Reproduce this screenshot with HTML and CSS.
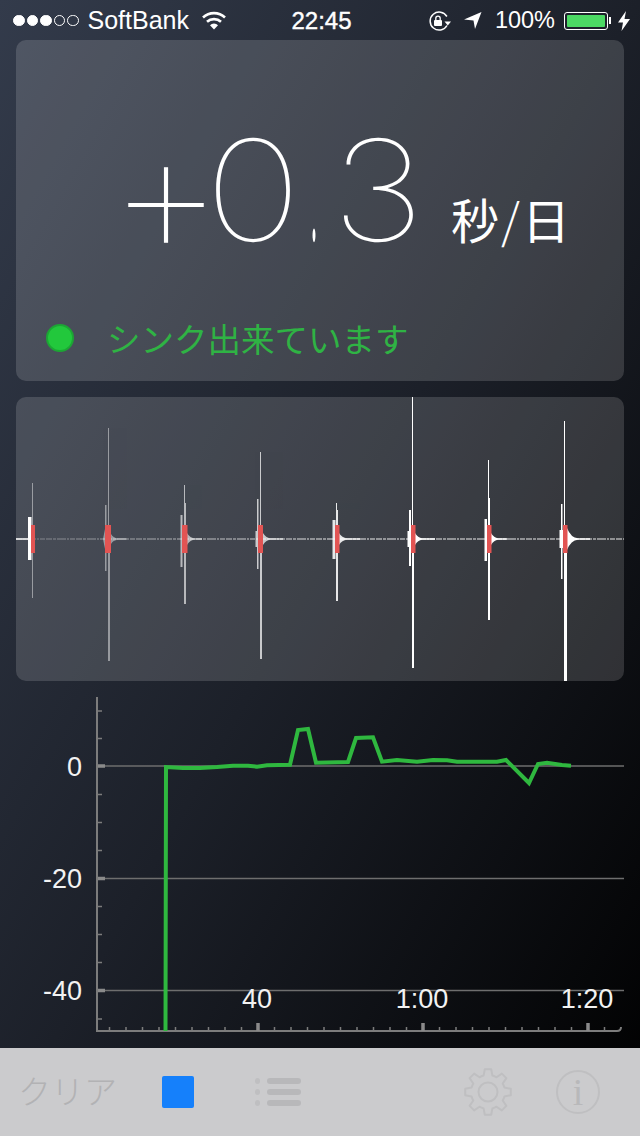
FILE: index.html
```html
<!DOCTYPE html>
<html lang="ja">
<head>
  <meta charset="UTF-8" />
  <meta name="viewport" content="width=device-width, initial-scale=1.0" />
  <title>Timegrapher</title>
  <link rel="stylesheet" href="styles.css">
</head>
<body>
  <div class="statusbar">
    <div class="status-left">
      <span class="sig"></span><span class="sig"></span><span class="sig"></span><span class="sig off"></span><span class="sig off"></span>
      <span class="carrier">SoftBank</span>
      <svg class="wifi" width="24" height="19" viewBox="0 0 24 19">
        <path d="M1 6.5A16 16 0 0 1 23 6.5" fill="none" stroke="#fff" stroke-width="2.6"/>
        <path d="M5 10.8A10.4 10.4 0 0 1 19 10.8" fill="none" stroke="#fff" stroke-width="2.6"/>
        <path d="M12 18.5L8 14.2A5.6 5.6 0 0 1 16 14.2Z" fill="#fff"/>
      </svg>
    </div>
    <div class="clock">22:45</div>
    <div class="status-right">
      <svg class="rotlock" width="24" height="20" viewBox="0 0 24 20">
        <path d="M19 14.5A9 9 0 1 1 18.9 5.500" fill="none" stroke="#fff" stroke-width="1.5"/>
        <path d="M16.500 10.500H23L19.800 14.500Z" fill="#fff"/>
        <rect x="6" y="9" width="8" height="6" rx="1" fill="#fff"/>
        <path d="M7.800 9V7.300A2.200 2.200 0 0 1 12.200 7.300V9" fill="none" stroke="#fff" stroke-width="1.300"/>
      </svg>
      <svg class="locarrow" width="18" height="17" viewBox="0 0 18 17">
        <path d="M0 7.500L17.500 0L11 17L9.500 8.500Z" fill="#fff"/>
      </svg>
      <span class="pct">100%</span>
      <div class="battery"><div class="battery-fill"></div></div>
      <div class="battery-nub"></div>
      <svg class="bolt" width="12" height="20" viewBox="0 0 12 20">
        <path d="M8 0L0 11.500H5L3.500 20L12 8H6.500Z" fill="#fff"/>
      </svg>
    </div>
  </div>

  <div class="card reading">
    <div class="rate">
      <span class="rate-char rate-plus">+</span>
      <span class="rate-char rate-zero">0</span>
      <span class="rate-char rate-dot">.</span>
      <span class="rate-char rate-three">3</span>
      <span class="rate-unit">秒<span class="slash">/</span>日</span>
    </div>
    <div class="sync">
      <span class="sync-dot"></span>
      <span class="sync-text">シンク出来ています</span>
    </div>
  </div>

  <div class="card wave">
    <svg class="wave-svg" width="608" height="284" viewBox="16 397 608 284">
      <defs>
        <linearGradient id="noiseFade" gradientUnits="userSpaceOnUse" x1="30" y1="0" x2="340" y2="0">
          <stop offset="0" stop-color="#fff" stop-opacity="0.3"/>
          <stop offset="1" stop-color="#fff" stop-opacity="0.9"/>
        </linearGradient>
      </defs>
      <!-- baseline noise -->
      <line class="noise" stroke="url(#noiseFade)" x1="16" y1="539" x2="624" y2="539"/>
      <line class="base" x1="16" y1="539" x2="28" y2="539"/>

      <g class="beat" opacity="0.45">
        <rect x="32" y="483" width="1" height="115"/>
      </g>
      <rect class="solid" x="28" y="517" width="3.500" height="43"/>

      <g class="beat" opacity="0.45">
        <rect x="108" y="428" width="1" height="100"/>
        <rect x="108" y="550" width="2" height="111"/>
        <rect x="105" y="505" width="1.500" height="66"/>
        <path d="M103 539L105 529V549ZM111 534Q113 538 118 538.300H127V539.700H118Q113 540 111 544Z"/>
      </g>
      <g class="beat" opacity="0.62">
        <rect x="184" y="485" width="1" height="45"/>
        <rect x="184" y="503" width="2" height="101"/>
        <rect x="180.500" y="515" width="2" height="52"/>
        <path d="M187 533Q190 538 194 538.300H202V539.700H194Q190 540 187 545Z"/>
      </g>
      <g class="beat" opacity="0.72">
        <rect x="260" y="452" width="1" height="80"/>
        <rect x="260" y="545" width="2" height="114"/>
        <rect x="257" y="499" width="1.500" height="70"/>
        <rect x="255.500" y="531" width="3" height="16"/>
        <path d="M263 533Q266 538 270 538.300H283V539.700H270Q266 540 263 545Z"/>
      </g>
      <g class="beat" opacity="0.88">
        <rect x="336" y="503" width="1" height="30"/>
        <rect x="336" y="510" width="2" height="91"/>
        <rect x="332.500" y="520" width="3" height="39"/>
        <path d="M339 533Q342 538 347 538.300H360V539.700H347Q342 540 339 545Z"/>
      </g>
      <g class="beat">
        <rect x="412" y="397" width="1" height="130"/>
        <rect x="412" y="545" width="2" height="123"/>
        <rect x="409" y="510" width="2" height="56"/>
        <rect x="407.500" y="531" width="4" height="16"/>
        <path d="M415 533Q418 538 422 538.300H435V539.700H422Q418 540 415 545Z"/>
      </g>
      <g class="beat">
        <rect x="488" y="460" width="1" height="70"/>
        <rect x="488" y="498" width="2" height="122"/>
        <rect x="484.500" y="519" width="2.500" height="42"/>
        <path d="M491 533Q494 538 498 538.300H507V539.700H498Q494 540 491 545Z"/>
      </g>
      <g class="beat">
        <rect x="564" y="421" width="1" height="110"/>
        <rect x="564" y="540" width="3" height="141"/>
        <rect x="561" y="504" width="1.500" height="75"/>
        <rect x="559.500" y="530" width="4" height="18"/>
        <path d="M567 528Q571 538 578 538.300H590V539.700H578Q571 540 567 550Z"/>
      </g>

      <g class="marks">
        <rect x="31" y="525" width="4" height="28"/>
        <rect x="105" y="525" width="6" height="28"/>
        <rect x="182" y="525" width="5.500" height="28"/>
        <rect x="258" y="525" width="5" height="28"/>
        <rect x="335" y="525" width="4.500" height="28"/>
        <rect x="411" y="525" width="4.500" height="28"/>
        <rect x="487" y="525" width="4.500" height="28"/>
        <rect x="563" y="525" width="4.500" height="28"/>
      </g>
    </svg>
  </div>

  <div class="chart">
    <svg width="640" height="367" viewBox="0 681 640 367">
      <path class="grid" d="M105 766H624M105 878.500H624M105 990.500H624"/>
      <path class="axis" d="M97 697V1031H617Q621 1031 621 1027"/>
      <path class="tick" d="M98 711H102M98 738.500H102M98 794.500H102M98 822.500H102M98 850.500H102M98 906.500H102M98 934.500H102M98 962.500H102M98 1019H102"/>
      <path class="tick-major" d="M98 766H105M98 878.500H105M98 990.500H105"/>
      <path class="tick" d="M109.500 1027V1031M126 1027V1031M142.500 1027V1031M159 1027V1031M175.500 1027V1031M192 1027V1031M208.500 1027V1031M225 1027V1031M241.500 1027V1031M274.500 1027V1031M291 1027V1031M307.500 1027V1031M324 1027V1031M340.500 1027V1031M357 1027V1031M373.500 1027V1031M390 1027V1031M406.500 1027V1031M439.500 1027V1031M456 1027V1031M472.500 1027V1031M489 1027V1031M505.500 1027V1031M522 1027V1031M538.500 1027V1031M555 1027V1031M571.500 1027V1031M604.500 1027V1031"/>
      <path class="tick-major" d="M258 1023V1031M423 1023V1031M588 1023V1031"/>
      <polyline class="trace" points="165.500,1031 166,767 183,768 200,768 217,767 233,765.700 248,765.700 257,766.700 267,765.300 290,764.700 298,730 308,729 316,762.700 348,762 356,738 373,737.300 382,761.700 397,760 417,761.700 433,760 447,760.300 457,761.700 497,761.700 506,760 529,783 538,764 547,762.700 562,765 571,765.700"/>
      <text class="ylabel" x="82" y="776">0</text>
      <text class="ylabel" x="82" y="888">-20</text>
      <text class="ylabel" x="82" y="1000">-40</text>
      <text class="xlabel" x="257" y="1008">40</text>
      <text class="xlabel" x="422" y="1008">1:00</text>
      <text class="xlabel" x="587" y="1008">1:20</text>
    </svg>
  </div>

  <div class="toolbar">
    <span class="clear">クリア</span>
    <span class="stop"></span>
    <div class="list-icon">
      <div class="list-row"><span class="list-dot"></span><span class="list-bar"></span></div>
      <div class="list-row"><span class="list-dot"></span><span class="list-bar"></span></div>
      <div class="list-row"><span class="list-dot"></span><span class="list-bar"></span></div>
    </div>
    <svg class="gear" width="50" height="50" viewBox="-25 -25 50 50">
      <path d="M16.420 -4.400L22.780 -3.200V3.200L16.420 4.400A17 17 0 0 1 14.720 8.500L18.370 13.840L13.840 18.370L8.500 14.720A17 17 0 0 1 4.400 16.420L3.200 22.780H-3.200L-4.400 16.420A17 17 0 0 1 -8.500 14.720L-13.840 18.370L-18.370 13.840L-14.720 8.500A17 17 0 0 1 -16.420 4.400L-22.780 3.200V-3.200L-16.420 -4.400A17 17 0 0 1 -14.720 -8.500L-18.370 -13.840L-13.840 -18.370L-8.500 -14.720A17 17 0 0 1 -4.400 -16.420L-3.200 -22.780H3.200L4.400 -16.420A17 17 0 0 1 8.500 -14.720L13.840 -18.370L18.370 -13.840L14.720 -8.500A17 17 0 0 1 16.420 -4.400Z"/>
      <circle r="9.500"/>
    </svg>
    <div class="info">i</div>
  </div>
</body>
</html>
```

FILE: styles.css
```css
html, body {
  margin: 0;
  padding: 0;
}

body {
  width: 640px;
  height: 1136px;
  overflow: hidden;
  display: flex;
  flex-direction: column;
  font-family: "Liberation Sans", Arial, sans-serif;
  color: white;
  background: linear-gradient(to bottom right, #333b4b 0%, #1c2029 50%, #000 100%);
}

.statusbar {
  height: 40px;
  flex: none;
  padding-top: 1px;
  box-sizing: border-box;
  display: flex;
  align-items: center;
  font-size: 24px;
}

.status-left, .status-right {
  flex: 1;
  box-sizing: border-box;
  display: flex;
  align-items: center;
}

.status-left {
  padding-left: 13px;
}

.status-right {
  justify-content: flex-end;
  padding-right: 10px;
}

.sig {
  width: 11.500px;
  height: 11.500px;
  margin-right: 2px;
  border: 1px solid #fff;
  border-radius: 50%;
  background: #fff;
  box-sizing: border-box;
}

.sig.off {
  background: none;
}

.carrier {
  margin-left: 7px;
  font-size: 25px;
}

.wifi {
  margin-left: 13px;
}

.clock {
  font-size: 24px;
  -webkit-text-stroke: 0.4px #fff;
}

.locarrow {
  margin-left: 12px;
}

.pct {
  margin-left: 13px;
  font-size: 23.500px;
}

.battery {
  width: 44px;
  height: 18px;
  margin-left: 9px;
  padding: 2px;
  box-sizing: border-box;
  border: 1px solid #fff;
  border-radius: 3px;
}

.battery-fill {
  height: 100%;
  background: #4cd964;
  border-radius: 1px;
}

.battery-nub {
  width: 2px;
  height: 7px;
  margin-left: 1px;
  background: #fff;
}

.bolt {
  margin-left: 7px;
}

.card {
  flex: none;
  margin: 0 16px;
  background: rgba(255, 255, 255, 0.15);
  border-radius: 10px;
}

.reading {
  height: 341px;
  display: flex;
  flex-direction: column;
}

.rate {
  height: 230px;
  box-sizing: border-box;
  padding: 43px 0 0 112px;
  display: flex;
  align-items: baseline;
  white-space: nowrap;
}

/* each glyph is a box of the reference's width, the thin face runs narrower */
.rate-char {
  display: flex;
  justify-content: center;
  font-family: Inter, "Liberation Sans", sans-serif;
  font-weight: 100;
  font-size: 140px;
  line-height: 1;
}

.rate-plus {
  width: 76px;
  font-size: 183px;
  transform: translateY(16px);
}

.rate-zero {
  width: 78px;
  margin-left: 10px;
  transform: scaleX(1.18);
}

.rate-dot {
  width: 38px;
  margin-left: 3px;
  transform: scale(0.4, 1.9);
  transform-origin: 50% 121px;
}

.rate-three {
  width: 72px;
  margin-left: 9px;
  transform: scaleX(1.14);
}

.rate-unit {
  margin-left: 37px;
  font-family: "Noto Sans CJK JP", sans-serif;
  font-size: 48px;
  line-height: 1;
  letter-spacing: 2px;
  transform: translateY(-2px);
}

.slash {
  font-weight: 300;
}

.sync {
  margin-top: 48px;
  padding-left: 30px;
  display: flex;
  align-items: center;
}

.sync-dot {
  width: 28px;
  height: 28px;
  box-sizing: border-box;
  border: 2px solid #1ca634;
  border-radius: 50%;
  background: #22c83c;
}

.sync-text {
  margin-left: 33px;
  font-family: "Noto Sans CJK JP", sans-serif;
  font-weight: 400;
  font-size: 33.5px;
  line-height: 40px;
  color: #2fb344;
}

.wave {
  height: 284px;
  margin-top: 16px;
  overflow: hidden;
}

.wave-svg {
  display: block;
}

.noise {
  stroke-width: 1.200;
  stroke-dasharray: 6 1 3 1 9 1 2 1 5 1;
}

.base {
  stroke: #fff;
  stroke-width: 1.500;
}

.beat, .solid {
  fill: #fff;
}

.marks {
  fill: #e25453;
}

.chart {
  flex: 1;
}

.chart svg {
  display: block;
}

.grid {
  fill: none;
  stroke: #6e6e6e;
  stroke-width: 1.500;
}

.axis {
  fill: none;
  stroke: #7c7c7c;
  stroke-width: 2;
}

.tick {
  fill: none;
  stroke: #7c7c7c;
  stroke-width: 1.500;
}

.tick-major {
  fill: none;
  stroke: #8a8a8a;
  stroke-width: 3.500;
}

.trace {
  fill: none;
  stroke: #2fb83f;
  stroke-width: 4;
}

.ylabel, .xlabel {
  font-family: "Liberation Sans", Arial, sans-serif;
  font-size: 27px;
  fill: #f2f2f2;
}

.ylabel {
  text-anchor: end;
}

.xlabel {
  text-anchor: middle;
}

.toolbar {
  height: 88px;
  flex: none;
  display: flex;
  align-items: center;
  background: #cbcbcd;
}

.clear {
  margin-left: 18px;
  margin-bottom: 4px;
  font-family: "Noto Sans CJK JP", sans-serif;
  font-weight: 300;
  font-size: 33px;
  color: #b2b2b4;
}

.stop {
  width: 32px;
  height: 32px;
  margin-left: 45px;
  border-radius: 2px;
  background: #1580fb;
}

.list-icon {
  margin-left: 61px;
  display: flex;
  flex-direction: column;
  gap: 5px;
}

.list-row {
  display: flex;
  align-items: center;
  gap: 7px;
}

.list-dot {
  width: 5px;
  height: 6px;
  border-radius: 50%;
  background: #bfbfc1;
}

.list-bar {
  width: 34px;
  height: 6px;
  border-radius: 3px;
  background: #b8b8ba;
}

.gear {
  margin-left: auto;
  fill: none;
  stroke: #bfbfc1;
  stroke-width: 2;
  stroke-linejoin: round;
}

.info {
  width: 44px;
  height: 44px;
  margin-left: 43px;
  margin-right: 40px;
  box-sizing: border-box;
  border: 2px solid #bfbfc1;
  border-radius: 50%;
  text-align: center;
  font-family: "Liberation Serif", serif;
  font-size: 38px;
  line-height: 40px;
  color: #b8b8ba;
}
```
